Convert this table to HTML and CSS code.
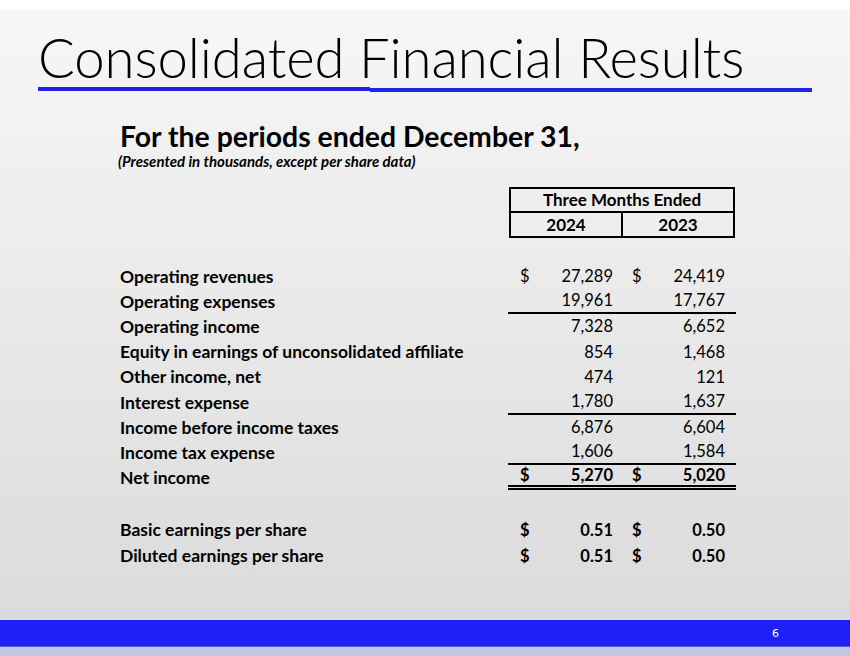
FILE: index.html
```html
<!DOCTYPE html>
<html lang="en">
<head>
<meta charset="utf-8">
<title>Consolidated Financial Results</title>
<link rel="stylesheet" href="styles.css">
</head>
<body>
<div class="slide">
  <header class="head">
    <h1 class="title">Consolidated Financial Results</h1>
    <div class="rule"><span class="seg-a"></span><span class="seg-b"></span></div>
  </header>
  <main class="content">
    <h2 class="subtitle">For the periods ended December 31,</h2>
    <p class="note">(Presented in thousands, except per share data)</p>
    <div class="fin">
      <div class="lbl"></div>
      <div class="box">
        <div class="box-top">Three Months Ended</div>
        <div class="box-years"><span>2024</span><span>2023</span></div>
      </div>

      <div class="gap"></div>

      <div class="lbl">Operating revenues</div>
      <div class="val c1"><span>$</span><span>27,289</span></div>
      <div class="val c2"><span>$</span><span>24,419</span></div>

      <div class="lbl">Operating expenses</div>
      <div class="val c1 under"><span></span><span>19,961</span></div>
      <div class="val c2 under"><span></span><span>17,767</span></div>

      <div class="lbl">Operating income</div>
      <div class="val c1"><span></span><span>7,328</span></div>
      <div class="val c2"><span></span><span>6,652</span></div>

      <div class="lbl">Equity in earnings of unconsolidated affiliate</div>
      <div class="val c1"><span></span><span>854</span></div>
      <div class="val c2"><span></span><span>1,468</span></div>

      <div class="lbl">Other income, net</div>
      <div class="val c1"><span></span><span>474</span></div>
      <div class="val c2"><span></span><span>121</span></div>

      <div class="lbl">Interest expense</div>
      <div class="val c1 under"><span></span><span>1,780</span></div>
      <div class="val c2 under"><span></span><span>1,637</span></div>

      <div class="lbl">Income before income taxes</div>
      <div class="val c1"><span></span><span>6,876</span></div>
      <div class="val c2"><span></span><span>6,604</span></div>

      <div class="lbl">Income tax expense</div>
      <div class="val c1 under"><span></span><span>1,606</span></div>
      <div class="val c2 under"><span></span><span>1,584</span></div>

      <div class="lbl">Net income</div>
      <div class="val c1 bold dbl"><span>$</span><span>5,270</span></div>
      <div class="val c2 bold dbl"><span>$</span><span>5,020</span></div>

      <div class="gap"></div>

      <div class="lbl">Basic earnings per share</div>
      <div class="val c1 bold"><span>$</span><span>0.51</span></div>
      <div class="val c2 bold"><span>$</span><span>0.50</span></div>

      <div class="lbl">Diluted earnings per share</div>
      <div class="val c1 bold"><span>$</span><span>0.51</span></div>
      <div class="val c2 bold"><span>$</span><span>0.50</span></div>
    </div>
  </main>
  <footer class="foot">
    <div class="bar"><span class="page">6</span></div>
    <div class="strip"></div>
  </footer>
</div>
</body>
</html>
```

FILE: styles.css
```css
* { box-sizing: border-box; }
html, body { margin: 0; padding: 0; }
body { width: 850px; height: 656px; overflow: hidden; }

.slide {
  width: 850px;
  height: 656px;
  display: flex;
  flex-direction: column;
  background: linear-gradient(#ffffff 0, #ffffff 9px, #f7f7f7 10px, #dbdbdb 620px);
  font-family: Lato, "Open Sans", sans-serif;
  color: #000;
}

.head { padding: 27px 38px 0 38px; }
.title {
  margin: 0;
  font-family: Lato, sans-serif;
  font-weight: 300;
  font-size: 54.5px;
  line-height: 60px;
  letter-spacing: -0.1px;
  color: #000;
  white-space: nowrap;
}
.rule {
  width: 774px;
  height: 5px;
  display: flex;
}
.seg-a { width: 332px; height: 4px; background: #2323e6; }
.seg-b { flex: 1; height: 4px; margin-top: 1px; background: #2323e6; }

.content { flex: 1; padding: 29px 0 0 120px; }
.subtitle {
  margin: 0;
  font-size: 28.4px;
  line-height: 30px;
  font-weight: 700;
}
.note {
  margin: 2px 0 0 -2px;
  font-size: 15px;
  line-height: 16px;
  font-style: italic;
  font-weight: 700;
}

.fin {
  margin-top: 18px;
  display: grid;
  grid-template-columns: 388px 114px 114px;
  grid-template-rows: 51px 25.5px repeat(9, 25.2px) 27px repeat(2, 25.6px);
  font-size: 16.5px;
  align-items: center;
}
.fin .box {
  grid-column: 2 / 4;
  height: 51px;
  align-self: start;
  margin: 0 1px 0 1px;
  border: 2px solid #000;
  font-weight: 700;
  font-size: 17px;
  display: flex;
  flex-direction: column;
}
.box-top {
  height: 24px;
  border-bottom: 2px solid #000;
  text-align: center;
  line-height: 22px;
}
.box-years { flex: 1; display: flex; }
.box-years span { flex: 1; text-align: center; line-height: 23px; }
.box-years span + span { border-left: 2px solid #000; }

.gap { grid-column: 1 / 4; }

.lbl { font-weight: 700; font-size: 17.5px; white-space: nowrap; }
.val {
  height: 100%;
  display: flex;
  justify-content: space-between;
  align-items: center;
}
.c1 { padding: 0 9px 0 12px; }
.c2 { padding: 0 11px 0 10px; }
.bold { font-weight: 700; }
.under { border-bottom: 2px solid #000; }
.dbl { border-bottom: 5px double #000; }

.foot { height: 36px; display: flex; flex-direction: column; }
.bar {
  height: 26px;
  background: #1f1ff8;
  display: flex;
  align-items: center;
  padding-left: 772px;
}
.page {
  color: #fff;
  font-family: "DejaVu Sans", sans-serif;
  font-size: 11px;
}
.strip { flex: 1; background: #c4c4e4; border-top: 1px solid #5a5ac8; }
```
